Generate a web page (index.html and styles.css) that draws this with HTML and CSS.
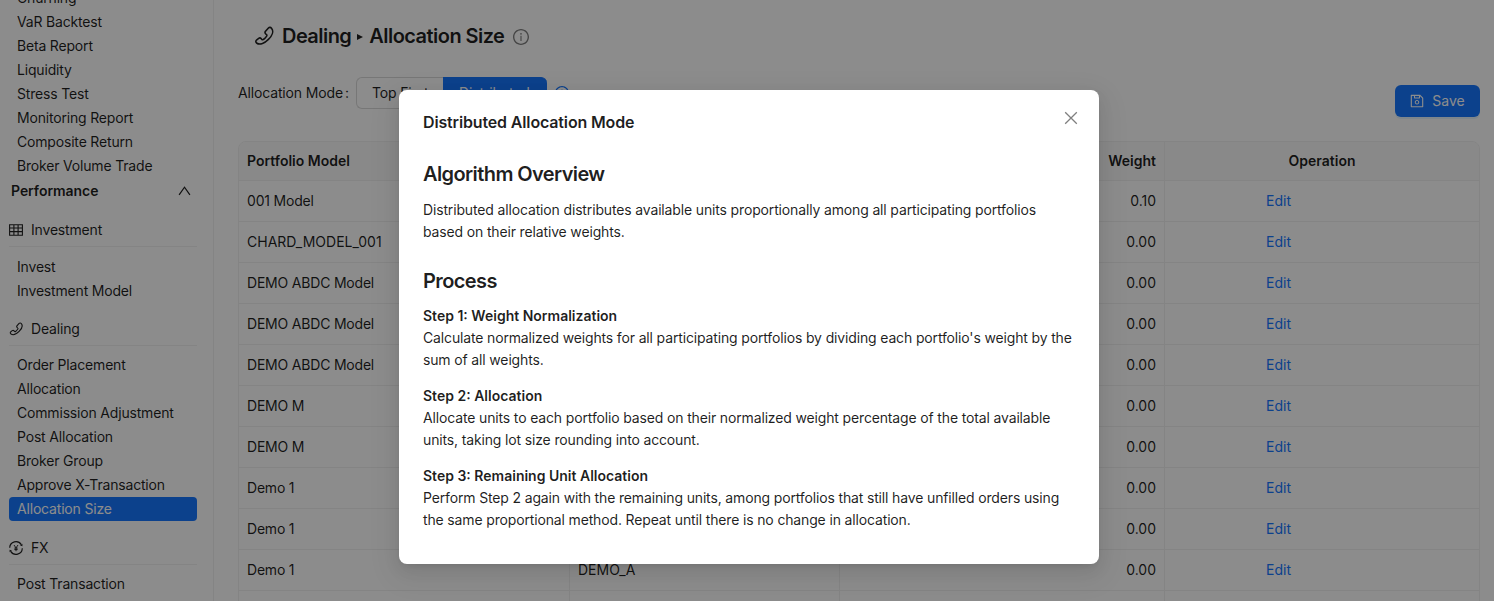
FILE: index.html
```html
<!DOCTYPE html>
<html lang="en">
<head>
<meta charset="utf-8">
<title>Allocation Size</title>
<link rel="stylesheet" href="styles.css">
</head>
<body>
<svg class="sprite" aria-hidden="true">
  <symbol id="phone" viewBox="0 0 24 24"><path d="M17.300 2.400c1-1 2.700-1 3.700.2 3 3.500.8 9.100-3.700 13.500-4.500 4.500-10.200 6.800-13.800 4.600-1.500-.9-1.800-2.800-.5-3.900l2.600-2c1-.7 2.300-.5 3.100.4l.8.900c.5.6 1.200.6 1.800.1 1.600-1.200 2.900-2.600 3.900-4.100.4-.7.4-1.200-.2-1.700l-.9-.8c-.9-.8-1.100-2-.5-3z" fill="none" stroke="currentColor" stroke-width="1.900"/></symbol>
  <symbol id="table" viewBox="0 0 14 14"><path d="M.6 1.700h12.800v10.600H.6zM.6 5h12.800M.6 8.600h12.800M4.900 1.700v10.600M9.100 1.700v10.600" fill="none" stroke="currentColor" stroke-width="1.100"/></symbol>
  <symbol id="fx" viewBox="0 0 14 14"><path d="M.7 6.800A6.300 6.300 0 0 1 12.300 3.600M13.300 7.200A6.300 6.300 0 0 1 1.700 10.400" fill="none" stroke="currentColor" stroke-width="1.150"/><path d="M13.400 2.800v2.400l-2.300-.8zM.6 11.200V8.800l2.300.8z"/><path d="M5 4l2 2.900L9 4M7 6.900v3.300M5.300 7.100h3.400M5.300 8.600h3.400" fill="none" stroke="currentColor" stroke-width=".9"/></symbol>
  <symbol id="info" viewBox="64 64 896 896"><path d="M512 64C264.6 64 64 264.6 64 512s200.6 448 448 448 448-200.6 448-448S759.4 64 512 64zm0 820c-205.400 0-372-166.600-372-372s166.600-372 372-372 372 166.600 372 372-166.600 372-372 372z"/><path d="M464 336a48 48 0 1096 0 48 48 0 10-96 0zm72 112h-48c-4.400 0-8 3.600-8 8v272c0 4.400 3.600 8 8 8h48c4.400 0 8-3.600 8-8V456c0-4.400-3.600-8-8-8z"/></symbol>
  <symbol id="save" viewBox="64 64 896 896"><path d="M893.3 293.3L730.7 130.7c-7.500-7.500-16.700-13-26.700-16V112H144c-17.700 0-32 14.300-32 32v736c0 17.700 14.300 32 32 32h736c17.700 0 32-14.300 32-32V338.500c0-17-6.700-33.200-18.700-45.200zM384 184h256v104H384V184zm456 656H184V184h136v136c0 17.700 14.300 32 32 32h320c17.700 0 32-14.300 32-32V205.800l136 136V840zM512 442c-79.500 0-144 64.500-144 144s64.500 144 144 144 144-64.500 144-144-64.500-144-144-144zm0 224c-44.200 0-80-35.800-80-80s35.800-80 80-80 80 35.800 80 80-35.800 80-80 80z"/></symbol>
</svg>
<div class="app">
  <aside class="sidebar">
    <nav class="menu">
      <a>Churning</a><a>VaR Backtest</a><a>Beta Report</a><a>Liquidity</a><a>Stress Test</a><a>Monitoring Report</a><a>Composite Return</a><a>Broker Volume Trade</a>
    </nav>
    <div class="group"><span>Performance</span><svg class="chevron" viewBox="0 0 12 10"><path d="M.6 8.800L6 1.200l5.400 7.600" fill="none" stroke="currentColor" stroke-width="1.200"/></svg></div>
    <h3 class="section"><svg class="icon"><use href="#table"/></svg>Investment</h3>
    <nav class="menu"><a>Invest</a><a>Investment Model</a></nav>
    <h3 class="section"><svg class="icon"><use href="#phone"/></svg>Dealing</h3>
    <nav class="menu low"><a>Order Placement</a><a>Allocation</a><a>Commission Adjustment</a><a>Post Allocation</a><a>Broker Group</a><a>Approve X-Transaction</a><a class="active">Allocation Size</a></nav>
    <h3 class="section"><svg class="icon"><use href="#fx"/></svg>FX</h3>
    <nav class="menu low"><a>Post Transaction</a></nav>
  </aside>
  <main class="content">
    <h1 class="title"><svg class="title-icon"><use href="#phone"/></svg><span>Dealing</span><i class="arrow"></i><span>Allocation Size</span><svg class="title-info"><use href="#info"/></svg></h1>
    <div class="toolbar">
      <div class="mode"><label>Allocation Mode<span class="colon">:</span></label>
        <div class="segmented"><span>Top First</span><span class="on">Distributed</span></div>
        <svg class="mode-info"><use href="#info"/></svg></div>
      <button class="save"><svg class="icon"><use href="#save"/></svg>Save</button>
    </div>
    <table class="grid">
      <colgroup><col class="c1"><col class="c2"><col class="c3"><col class="c4"></colgroup>
      <thead><tr><th>Portfolio Model</th><th></th><th class="num">Weight</th><th class="op">Operation</th></tr></thead>
      <tbody>
        <tr><td>001 Model</td><td></td><td class="num">0.10</td><td><a>Edit</a></td></tr>
        <tr><td class="wide">CHARD_MODEL_001</td><td></td><td class="num">0.00</td><td><a>Edit</a></td></tr>
        <tr><td>DEMO ABDC Model</td><td></td><td class="num">0.00</td><td><a>Edit</a></td></tr>
        <tr><td>DEMO ABDC Model</td><td></td><td class="num">0.00</td><td><a>Edit</a></td></tr>
        <tr><td>DEMO ABDC Model</td><td></td><td class="num">0.00</td><td><a>Edit</a></td></tr>
        <tr><td>DEMO M</td><td></td><td class="num">0.00</td><td><a>Edit</a></td></tr>
        <tr><td>DEMO M</td><td></td><td class="num">0.00</td><td><a>Edit</a></td></tr>
        <tr><td>Demo 1</td><td></td><td class="num">0.00</td><td><a>Edit</a></td></tr>
        <tr><td>Demo 1</td><td></td><td class="num">0.00</td><td><a>Edit</a></td></tr>
        <tr><td>Demo 1</td><td class="wide">DEMO_A</td><td class="num">0.00</td><td><a>Edit</a></td></tr>
        <tr><td></td><td></td><td></td><td></td></tr>
      </tbody>
    </table>
  </main>
</div>
<div class="mask">
  <section class="modal" role="dialog">
    <header class="modal-head"><h2>Distributed Allocation Mode</h2>
      <svg class="close" viewBox="0 0 14 14"><path d="M1.200 1.200l11.600 11.600M12.800 1.200L1.200 12.800" fill="none" stroke="currentColor" stroke-width="1.300"/></svg></header>
    <h4>Algorithm Overview</h4>
    <p>Distributed allocation distributes available units proportionally among all participating portfolios<br>based on their relative weights.</p>
    <h4 class="process">Process</h4>
    <p><strong>Step 1: Weight Normalization</strong><br>Calculate normalized weights for all participating portfolios by dividing each portfolio's weight by the<br>sum of all weights.</p>
    <p><strong>Step 2: Allocation</strong><br>Allocate units to each portfolio based on their normalized weight percentage of the total available<br>units, taking lot size rounding into account.</p>
    <p><strong>Step 3: Remaining Unit Allocation</strong><br>Perform Step 2 again with the remaining units, among portfolios that still have unfilled orders using<br>the same proportional method. Repeat until there is no change in allocation.</p>
  </section>
</div>
</body>
</html>
```
FILE: styles.css
```css
* { box-sizing: border-box; }
body { margin: 0; height: 601px; overflow: hidden; background: #fff; color: rgba(0,0,0,.88); font: 14px/22px Inter, "Liberation Sans", sans-serif; letter-spacing: -.15px; white-space: nowrap; }
h1, h2, h3, h4, p { margin: 0; }
svg { fill: currentColor; flex: none; }
.sprite { position: absolute; width: 0; height: 0; }
.app { display: flex; height: 601px; overflow: hidden; }

.sidebar { width: 214px; flex: none; border-right: 1px solid #f0f0f0; padding: 0 16px 0 9px; margin-top: -15px; height: 616px; letter-spacing: -.18px; }
.menu a { display: block; height: 24px; line-height: 25px; padding-left: 8px; border-radius: 4px; }
.menu.low a { line-height: 24px; }
.menu .active { background: #1677ff; color: #fff; }
.group { display: flex; justify-content: space-between; align-items: center; height: 26px; padding: 1px 6px 0 2px; font-weight: 600; letter-spacing: -.05px; }
.chevron { width: 13px; height: 10px; }
.section { display: flex; align-items: center; height: 44px; padding-top: 11px; margin-bottom: 7px; border-bottom: 1px solid #f0f0f0; font-size: 14px; font-weight: 400; }
.icon { width: 14px; height: 14px; margin-right: 8px; }

.content { flex: 1; padding: 0 14px 0 24px; }
.title { display: flex; align-items: center; height: 72px; padding: 0 0 1px 16px; font-size: 20px; font-weight: 600; letter-spacing: -.55px; }
.title-icon { width: 20px; height: 20px; margin-right: 8px; }
.arrow { border: 3.500px solid transparent; border-left: 6px solid currentColor; border-right: 0; margin: 2px 6px 0; }
.title-info { width: 16px; height: 16px; margin: 2px 0 0 9px; color: rgba(0,0,0,.5); }
.toolbar { display: flex; justify-content: space-between; height: 69px; padding-top: 5px; }
.mode { display: flex; align-items: center; height: 32px; }
.mode label { width: 118px; }
.colon { margin-left: 2px; }
.segmented { display: flex; line-height: 32px; }
.segmented span { height: 32px; width: 87px; padding-left: 15px; border: 1px solid #d9d9d9; border-right: 0; border-radius: 6px 0 0 6px; line-height: 30px; }
.segmented .on { width: 104px; background: #1677ff; border-color: #1677ff; border-radius: 0 6px 6px 0; color: #fff; }
.mode-info { width: 14px; height: 14px; margin-left: 8px; color: #1677ff; }
.save { display: flex; align-items: center; justify-content: center; width: 85px; height: 32px; margin-top: 8px; border: 0; border-radius: 6px; background: #1677ff; color: #fff; font: inherit; box-shadow: 0 2px 0 rgba(5,145,255,.1); }

.grid { width: 1242px; table-layout: fixed; border-collapse: separate; border-spacing: 0; border: 1px solid #f0f0f0; border-radius: 8px 8px 0 0; overflow: hidden; }
.c1 { width: 331px; } .c2 { width: 270px; } .c3 { width: 325px; }
.grid th { height: 39px; padding: 0 8px; background: #fafafa; font-weight: 600; text-align: left; letter-spacing: 0; }
.grid td { height: 41px; padding: 0 8px; letter-spacing: -.2px; }
.grid th, .grid td { border-right: 1px solid #f0f0f0; border-bottom: 1px solid #f0f0f0; }
.grid th:last-child, .grid td:last-child { border-right: 0; }
.grid .num { text-align: right; letter-spacing: 0; }
.grid .wide { letter-spacing: 0; }
.grid .op { text-align: center; }
.grid a { color: #1677ff; padding-left: 93px; letter-spacing: 0; }

.mask { position: absolute; inset: 0; background: rgba(0,0,0,.45); display: flex; justify-content: center; align-items: flex-start; padding: 90px 0 0 4px; overflow: hidden; }
.modal { width: 700px; height: 474px; padding: 20px 24px; background: #fff; border-radius: 8px; box-shadow: 0 6px 16px 0 rgba(0,0,0,.08), 0 3px 6px -4px rgba(0,0,0,.12), 0 9px 28px 8px rgba(0,0,0,.05); }
.modal-head { display: flex; justify-content: space-between; height: 50px; }
.modal-head h2 { font-size: 16px; line-height: 24px; font-weight: 600; }
.close { width: 14px; height: 14px; margin: 1px -3px 0 0; color: rgba(0,0,0,.5); }
.modal h4 { font-size: 20px; line-height: 28px; font-weight: 600; margin-bottom: 11px; letter-spacing: -.6px; }
.modal .process { margin-top: 24px; margin-bottom: 10px; }
.modal p { margin-bottom: 14px; }
.modal strong { font-weight: 600; letter-spacing: 0; }
```
